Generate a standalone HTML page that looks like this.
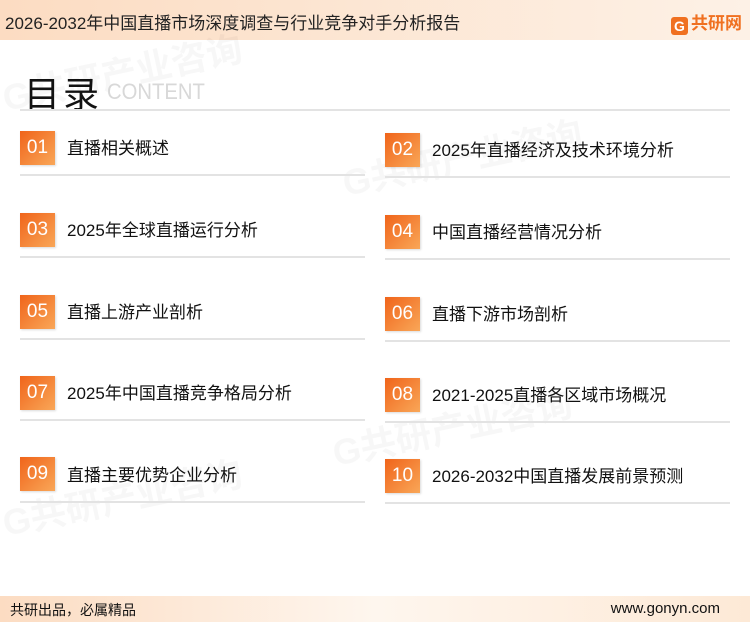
<!DOCTYPE html>
<html><head><meta charset="utf-8"><style>
*{margin:0;padding:0;box-sizing:border-box}
body{width:750px;height:622px;position:relative;background:#fff;font-family:"Liberation Sans","Noto Sans CJK SC",sans-serif;overflow:hidden}
.hdr{position:absolute;left:0;top:0;width:750px;height:40px;background:linear-gradient(90deg,#fcdcc2,#fdf1e6);}
.hdr .t{position:absolute;left:5px;top:9px;font-size:17px;color:#222}
.logo{position:absolute;right:8px;top:9px;font-size:17px;font-weight:bold;color:#f07020}
.logo b{display:inline-block;width:17px;height:18px;background:#f07020;color:#fff;font-size:14px;text-align:center;line-height:18px;border-radius:3px;margin-right:3px;vertical-align:-2px}
.ttl{position:absolute;left:24px;top:66px;font-size:36px;color:#111;letter-spacing:3px}
.ct{position:absolute;left:107px;top:79px;font-size:22px;color:#d8d8d8;transform:scaleX(.92);transform-origin:left}
.ln{position:absolute;height:2px;background:#e3e3e3}
.box{position:absolute;width:35px;height:34px;background:linear-gradient(135deg,#f0641a,#f9a758);color:#fff;font-size:19px;display:flex;align-items:center;justify-content:center;box-shadow:1px 1px 2px rgba(0,0,0,.15)}
.tx{position:absolute;font-size:17px;color:#111}
.ftr{position:absolute;left:0;top:596px;width:750px;height:26px;background:linear-gradient(90deg,#fcdcc2,#fef6ee 50%,#fde9d6);}
.ftr .a{position:absolute;left:10px;top:4px;font-size:14px;color:#111}
.ftr .b{position:absolute;right:30px;top:4px;font-size:15px;color:#111}
.wm{position:absolute;color:rgba(0,0,0,.03);font-size:36px;font-weight:bold;transform:rotate(-12deg);white-space:nowrap}
</style></head><body>
<div class="hdr"><div class="t">2026-2032年中国直播市场深度调查与行业竞争对手分析报告</div><div class="logo"><b>G</b>共研网</div></div>
<div class="wm" style="left:0;top:45px">G共研产业咨询</div>
<div class="wm" style="left:340px;top:130px">G共研产业咨询</div>
<div class="wm" style="left:0;top:470px">G共研产业咨询</div>
<div class="wm" style="left:330px;top:400px">G共研产业咨询</div>
<div class="ttl">目录</div><div class="ct">CONTENT</div>
<div class="ln" style="left:20px;top:109px;width:710px"></div>

<div class="box" style="left:20px;top:131px">01</div><div class="tx" style="left:67px;top:134px">直播相关概述</div>
<div class="box" style="left:385px;top:133px">02</div><div class="tx" style="left:432px;top:136px">2025年直播经济及技术环境分析</div>
<div class="ln" style="left:20px;top:174px;width:345px"></div><div class="ln" style="left:385px;top:176px;width:345px"></div>

<div class="box" style="left:20px;top:213px">03</div><div class="tx" style="left:67px;top:216px">2025年全球直播运行分析</div>
<div class="box" style="left:385px;top:215px">04</div><div class="tx" style="left:432px;top:218px">中国直播经营情况分析</div>
<div class="ln" style="left:20px;top:256px;width:345px"></div><div class="ln" style="left:385px;top:258px;width:345px"></div>

<div class="box" style="left:20px;top:295px">05</div><div class="tx" style="left:67px;top:298px">直播上游产业剖析</div>
<div class="box" style="left:385px;top:297px">06</div><div class="tx" style="left:432px;top:300px">直播下游市场剖析</div>
<div class="ln" style="left:20px;top:338px;width:345px"></div><div class="ln" style="left:385px;top:340px;width:345px"></div>

<div class="box" style="left:20px;top:376px">07</div><div class="tx" style="left:67px;top:379px">2025年中国直播竞争格局分析</div>
<div class="box" style="left:385px;top:378px">08</div><div class="tx" style="left:432px;top:381px">2021-2025直播各区域市场概况</div>
<div class="ln" style="left:20px;top:419px;width:345px"></div><div class="ln" style="left:385px;top:421px;width:345px"></div>

<div class="box" style="left:20px;top:457px">09</div><div class="tx" style="left:67px;top:461px">直播主要优势企业分析</div>
<div class="box" style="left:385px;top:459px">10</div><div class="tx" style="left:432px;top:462px">2026-2032中国直播发展前景预测</div>
<div class="ln" style="left:20px;top:501px;width:345px"></div><div class="ln" style="left:385px;top:502px;width:345px"></div>

<div class="ftr"><div class="a">共研出品，必属精品</div><div class="b">www.gonyn.com</div></div>
</body></html>
